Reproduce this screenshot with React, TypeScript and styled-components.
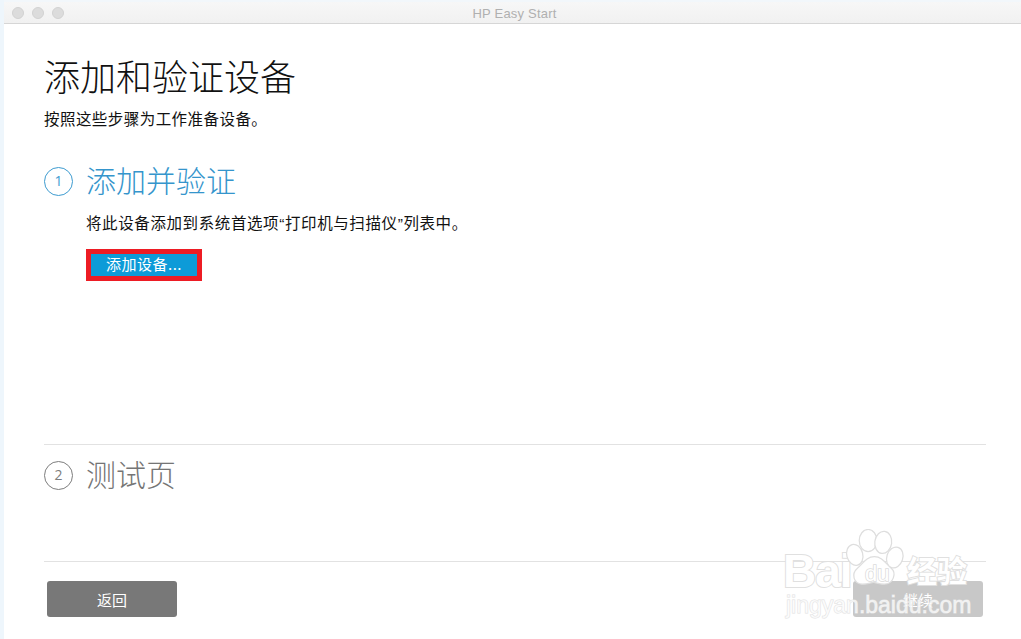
import React from "react";
import styled, { createGlobalStyle } from "styled-components";

const GlobalStyle = createGlobalStyle`
  html, body {
    margin: 0;
    padding: 0;
    background: #fff;
  }
  body {
    font-family: "Noto Sans CJK SC", "Liberation Sans", sans-serif;
  }
`;

const Window = styled.div`
  position: relative;
  width: 1021px;
  height: 639px;
  box-sizing: border-box;
  overflow: hidden;
  display: flex;
  flex-direction: column;
  background: #fff;
  border-left: 4px solid #eef6fc;
`;

const TitleBar = styled.header`
  position: relative;
  height: 24px;
  flex: none;
  box-sizing: border-box;
  display: flex;
  align-items: center;
  padding-left: 8px;
  gap: 8px;
  background: linear-gradient(#f7f7f7, #f1f1f1);
  border-top: 2px solid #f2f7fb;
  border-bottom: 1px solid #d6d6d6;
`;

const TrafficLight = styled.span`
  width: 12px;
  height: 12px;
  border-radius: 50%;
  background: #dcdcdc;
  border: 1px solid #d2d2d2;
  box-sizing: border-box;
`;

const WindowTitle = styled.div`
  position: absolute;
  left: 0;
  right: 0;
  top: 2px;
  text-align: center;
  font-family: "Liberation Sans", sans-serif;
  font-size: 13px;
  line-height: 20px;
  letter-spacing: 0.2px;
  color: #b0b0b0;
  padding-left: 4px;
`;

const Main = styled.main`
  flex: 1;
  display: flex;
  flex-direction: column;
  padding: 0 35px 0 40px;
`;

const PageTitle = styled.h1`
  margin: 27px 0 0;
  font-size: 36px;
  line-height: 48px;
  font-weight: 300;
  color: #111;
`;

const Subtitle = styled.p`
  margin: 8px 0 0;
  font-size: 15.5px;
  line-height: 22px;
  letter-spacing: 0.45px;
  color: #111;
`;

const Step = styled.section<{ $height: number }>`
  height: ${({ $height }) => $height}px;
  box-sizing: border-box;
`;

const StepHeader = styled.div<{ $offset: number }>`
  display: flex;
  align-items: center;
  gap: 13px;
  margin-top: ${({ $offset }) => $offset}px;
`;

const StepNumber = styled.span<{ $color: string }>`
  width: 29px;
  height: 29px;
  margin-top: 4px;
  flex: none;
  box-sizing: border-box;
  border-radius: 50%;
  border: 1.5px solid ${({ $color }) => $color};
  color: ${({ $color }) => $color};
  display: flex;
  align-items: center;
  justify-content: center;
  font-family: "Open Sans", sans-serif;
  font-size: 14px;
  line-height: 1;
`;

const StepTitle = styled.h2<{ $color: string }>`
  margin: 0;
  font-size: 30px;
  line-height: 42px;
  font-weight: 300;
  color: ${({ $color }) => $color};
`;

const StepBody = styled.div`
  padding-left: 42px;
`;

const StepText = styled.p`
  margin: 13px 0 0;
  font-family: "Liberation Sans", "Noto Sans CJK SC", sans-serif;
  font-size: 15.5px;
  line-height: 22px;
  letter-spacing: 0.6px;
  color: #111;
`;

const AddButton = styled.button`
  display: block;
  margin: 14px 0 0;
  width: 116px;
  height: 32px;
  box-sizing: border-box;
  border: 5px solid #ed1c24;
  padding: 0 0 2px;
  background: #0d9bd8;
  color: #fff;
  font-family: inherit;
  font-size: 15px;
  line-height: 20px;
  letter-spacing: 0.5px;
`;

const Divider = styled.hr`
  margin: 0;
  height: 1px;
  border: 0;
  flex: none;
  background: #e2e2e2;
`;

const Footer = styled.footer`
  display: flex;
  justify-content: space-between;
  padding: 19px 3px 0;
`;

const FooterButton = styled.button<{ $disabled?: boolean }>`
  width: 130px;
  height: 36px;
  border: 0;
  padding: 0;
  border-radius: 3px;
  background: ${({ $disabled }) => ($disabled ? "#c8c8c8" : "#787878")};
  color: #fff;
  font-family: inherit;
  font-size: 15px;
`;

const Watermark = styled.div`
  position: absolute;
  left: 780px;
  top: 526px;
  width: 190px;
  height: 92px;
  pointer-events: none;
`;

const WatermarkPaw = styled.svg`
  position: absolute;
  left: 61px;
  top: 3px;
`;

const outlined = `
  color: #fff;
  -webkit-text-stroke: 2px #e0e0e0;
  paint-order: stroke fill;
  white-space: nowrap;
`;

const WatermarkBrand = styled.span`
  ${outlined}
  position: absolute;
  left: -1px;
  top: 20px;
  font-family: "Liberation Sans", sans-serif;
  font-size: 46px;
  line-height: 50px;
  font-weight: 700;
  letter-spacing: -1px;
`;

const WatermarkCn = styled.span`
  ${outlined}
  position: absolute;
  left: 123px;
  top: 21px;
  font-size: 30px;
  line-height: 44px;
  font-weight: 700;
`;

const WatermarkDu = styled.span`
  position: absolute;
  left: 81px;
  top: 36px;
  font-family: "Liberation Sans", sans-serif;
  font-size: 22px;
  line-height: 24px;
  color: #fff;
  -webkit-text-stroke: 1.6px #dcdcdc;
  paint-order: stroke fill;
`;

const WatermarkUrl = styled.span`
  position: absolute;
  left: 2px;
  top: 65px;
  font-family: "Liberation Sans", sans-serif;
  font-size: 23px;
  line-height: 28px;
  white-space: nowrap;
  color: rgba(255, 255, 255, 0.7);
  -webkit-text-stroke: 1px #e2e2e2;
  paint-order: stroke fill;
`;

const App: React.FC = () => {
  return (
    <>
      <GlobalStyle />
      <Window>
        <TitleBar>
          <TrafficLight />
          <TrafficLight />
          <TrafficLight />
          <WindowTitle>HP Easy Start</WindowTitle>
        </TitleBar>
        <Main>
          <PageTitle>添加和验证设备</PageTitle>
          <Subtitle>按照这些步骤为工作准备设备。</Subtitle>
          <Step $height={315}>
            <StepHeader $offset={29}>
              <StepNumber $color="#3d9bd0">1</StepNumber>
              <StepTitle $color="#3595cc">添加并验证</StepTitle>
            </StepHeader>
            <StepBody>
              <StepText>将此设备添加到系统首选项“打印机与扫描仪”列表中。</StepText>
              <AddButton>添加设备...</AddButton>
            </StepBody>
          </Step>
          <Divider />
          <Step $height={116}>
            <StepHeader $offset={7}>
              <StepNumber $color="#7d7d7d">2</StepNumber>
              <StepTitle $color="#757575">测试页</StepTitle>
            </StepHeader>
          </Step>
          <Divider />
          <Footer>
            <FooterButton>返回</FooterButton>
            <FooterButton $disabled>继续</FooterButton>
          </Footer>
        </Main>
        <Watermark>
          <WatermarkBrand>Bai</WatermarkBrand>
          <WatermarkPaw width="64" height="57" viewBox="0 0 72 64" fill="#fff" stroke="#dedede" strokeWidth="1.4">
            <ellipse cx="11" cy="29" rx="9" ry="12" transform="rotate(-15 11 29)" />
            <ellipse cx="26" cy="13" rx="10" ry="12.5" />
            <ellipse cx="43" cy="15" rx="9.5" ry="12.5" transform="rotate(8 43 15)" />
            <ellipse cx="56" cy="32" rx="9" ry="12" transform="rotate(18 56 32)" />
            <path d="M33 31c9 0 13 8 19 13 6 5 3 18-8 18-6 0-9-2-12-2s-6 2-12 2c-11 0-13-12-6-18 6-5 10-13 19-13z" />
          </WatermarkPaw>
          <WatermarkDu>du</WatermarkDu>
          <WatermarkCn>经验</WatermarkCn>
          <WatermarkUrl>jingyan.baidu.com</WatermarkUrl>
        </Watermark>
      </Window>
    </>
  );
};

export default App;
